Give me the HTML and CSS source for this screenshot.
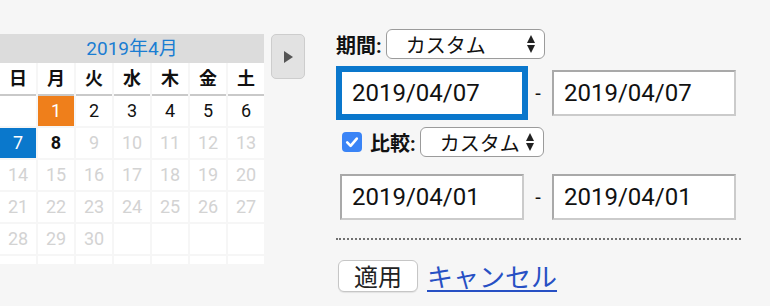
FILE: index.html
```html
<!DOCTYPE html>
<html lang="ja">

<head>
    <meta charset="UTF-8">
    <title>期間の選択</title>
    <link rel="stylesheet" href="styles.css">
</head>

<body>
    <div class="page">
        <div class="calendar">
            <div class="cal-title">2019年4月</div>
            <div class="cal-week">
                <span>日</span><span>月</span><span>火</span><span>水</span><span>木</span><span>金</span><span>土</span>
            </div>
            <div class="cal-days">
                <span></span><span class="start">1</span><span>2</span><span>3</span><span>4</span><span>5</span><span>6</span>
                <span class="end">7</span><span class="today">8</span><span class="off">9</span><span class="off">10</span><span class="off">11</span><span class="off">12</span><span class="off">13</span>
                <span class="off">14</span><span class="off">15</span><span class="off">16</span><span class="off">17</span><span class="off">18</span><span class="off">19</span><span class="off">20</span>
                <span class="off">21</span><span class="off">22</span><span class="off">23</span><span class="off">24</span><span class="off">25</span><span class="off">26</span><span class="off">27</span>
                <span class="off">28</span><span class="off">29</span><span class="off">30</span><span></span><span></span><span></span><span></span>
                <span></span><span></span><span></span><span></span><span></span><span></span><span></span>
            </div>
        </div>

        <button class="next" type="button">
            <svg width="9" height="12" viewBox="0 0 9 12"><polygon points="0,0 9,6 0,12" fill="#555"/></svg>
        </button>

        <div class="panel">
            <div class="row">
                <label class="label">期間:</label>
                <div class="select range-select">
                    <span class="select-text">カスタム</span>
                    <svg class="arrows" width="8" height="18" viewBox="0 0 8 18"><polygon points="0,8 4,0 8,8"/><polygon points="0,10 8,10 4,18"/></svg>
                </div>
            </div>
            <div class="row dates first-dates">
                <input class="date focus" type="text" value="2019/04/07">
                <span class="dash">-</span>
                <input class="date" type="text" value="2019/04/07">
            </div>
            <div class="row compare">
                <span class="check">
                    <svg width="20" height="20" viewBox="0 0 20 20"><path d="M5.2 10.4 L8.6 13.8 L14.8 6.6" fill="none" stroke="#fff" stroke-width="2.6" stroke-linecap="round" stroke-linejoin="round"/></svg>
                </span>
                <label class="label">比較:</label>
                <div class="select compare-select">
                    <span class="select-text">カスタム</span>
                    <svg class="arrows" width="8" height="18" viewBox="0 0 8 18"><polygon points="0,8 4,0 8,8"/><polygon points="0,10 8,10 4,18"/></svg>
                </div>
            </div>
            <div class="row dates second-dates">
                <input class="date" type="text" value="2019/04/01">
                <span class="dash">-</span>
                <input class="date" type="text" value="2019/04/01">
            </div>
            <div class="divider"></div>
            <div class="row actions">
                <button class="apply" type="button">適用</button>
                <a class="cancel" href="#">キャンセル</a>
            </div>
        </div>
    </div>
</body>

</html>
```

FILE: styles.css
```css
body {
    margin: 0;
    background-color: #f6f6f6;
    font-family: Roboto, "Noto Sans CJK JP", sans-serif;
    color: #111;
}

.page {
    display: flex;
    align-items: flex-start;
}

/* calendar */

.calendar {
    width: 264px;
    height: 230px;
    margin-top: 34px;
    overflow: hidden;
    flex: none;
}

.cal-title {
    height: 29px;
    line-height: 29px;
    background-color: #dcdcdc;
    color: #1a7dd2;
    text-align: center;
    font-size: 19px;
}

.cal-week,
.cal-days {
    display: grid;
    grid-template-columns: repeat(7, 36px);
    column-gap: 2px;
}

.cal-days {
    row-gap: 2px;
}

.cal-week span {
    height: 31px;
    line-height: 31px;
    background-color: #fff;
    border-bottom: 2px solid #c9c9c9;
    text-align: center;
    font-size: 18px;
    font-weight: bold;
}

.cal-days span {
    height: 30px;
    line-height: 30px;
    background-color: #fff;
    text-align: center;
    font-size: 18px;
}

.cal-days .off {
    color: #d3d3d3;
}

.cal-days .today {
    font-weight: bold;
}

.cal-days .start {
    background-color: #ef7f1b;
    color: #fff;
}

.cal-days .end {
    background-color: #0a78cc;
    color: #fff;
}

.next {
    flex: none;
    width: 34px;
    height: 45px;
    margin: 34px 0 0 7px;
    padding: 0;
    border: 1px solid #cdcdcd;
    border-radius: 5px;
    background-color: #e2e2e2;
    display: flex;
    align-items: center;
    justify-content: center;
}

/* range panel */

.panel {
    margin-left: 31px;
    padding-top: 29px;
    width: 405px;
}

.row {
    display: flex;
    align-items: center;
}

.label {
    font-size: 20px;
    font-weight: bold;
    margin-right: 4px;
}

.select {
    box-sizing: border-box;
    height: 30px;
    border: 1px solid #9b9b9b;
    border-radius: 6px;
    background-color: #fff;
    display: flex;
    align-items: center;
    padding: 0 9px 0 0;
    font-size: 20px;
}

.select-text {
    margin-left: 19px;
    flex: 1;
}

.range-select {
    width: 159px;
}

.compare-select {
    width: 124px;
}

.arrows {
    fill: #222;
    flex: none;
}

.dates {
    padding-left: 4px;
}

.first-dates {
    margin-top: 11px;
}

.compare {
    margin-top: 11px;
    padding-left: 6px;
}

.second-dates {
    margin-top: 17px;
}

.date {
    box-sizing: border-box;
    width: 184px;
    height: 46px;
    margin: 0;
    padding: 0 10px;
    border: 2px solid;
    border-color: #a9a9a9 #cbcbcb #cbcbcb #a9a9a9;
    background-color: #fff;
    font-family: Roboto, sans-serif;
    font-size: 24px;
    color: #111;
}

.date.focus {
    border-color: #0a77cc;
    outline: 4px solid #0a77cc;
}

.dash {
    width: 28px;
    text-align: center;
    font-size: 20px;
}

.check {
    width: 20px;
    height: 20px;
    border-radius: 4px;
    background-color: #3a84f6;
    margin-right: 8px;
    display: flex;
}

.divider {
    margin-top: 18px;
    border-top: 2px dotted #707070;
}

.actions {
    margin-top: 17px;
}

.apply {
    box-sizing: border-box;
    width: 80px;
    height: 32px;
    margin: 0 0 0 2px;
    padding: 0;
    border: 1px solid #c6c6c6;
    border-radius: 6px;
    background-color: #fff;
    box-shadow: 0 1px 1px rgba(0, 0, 0, 0.08);
    font-family: "Noto Sans CJK JP", sans-serif;
    font-size: 24px;
    line-height: 30px;
    color: #222;
}

.cancel {
    margin-left: 9px;
    font-size: 26px;
    color: #2750c4;
    text-decoration-thickness: 2px;
    text-underline-offset: 3px;
}
```
